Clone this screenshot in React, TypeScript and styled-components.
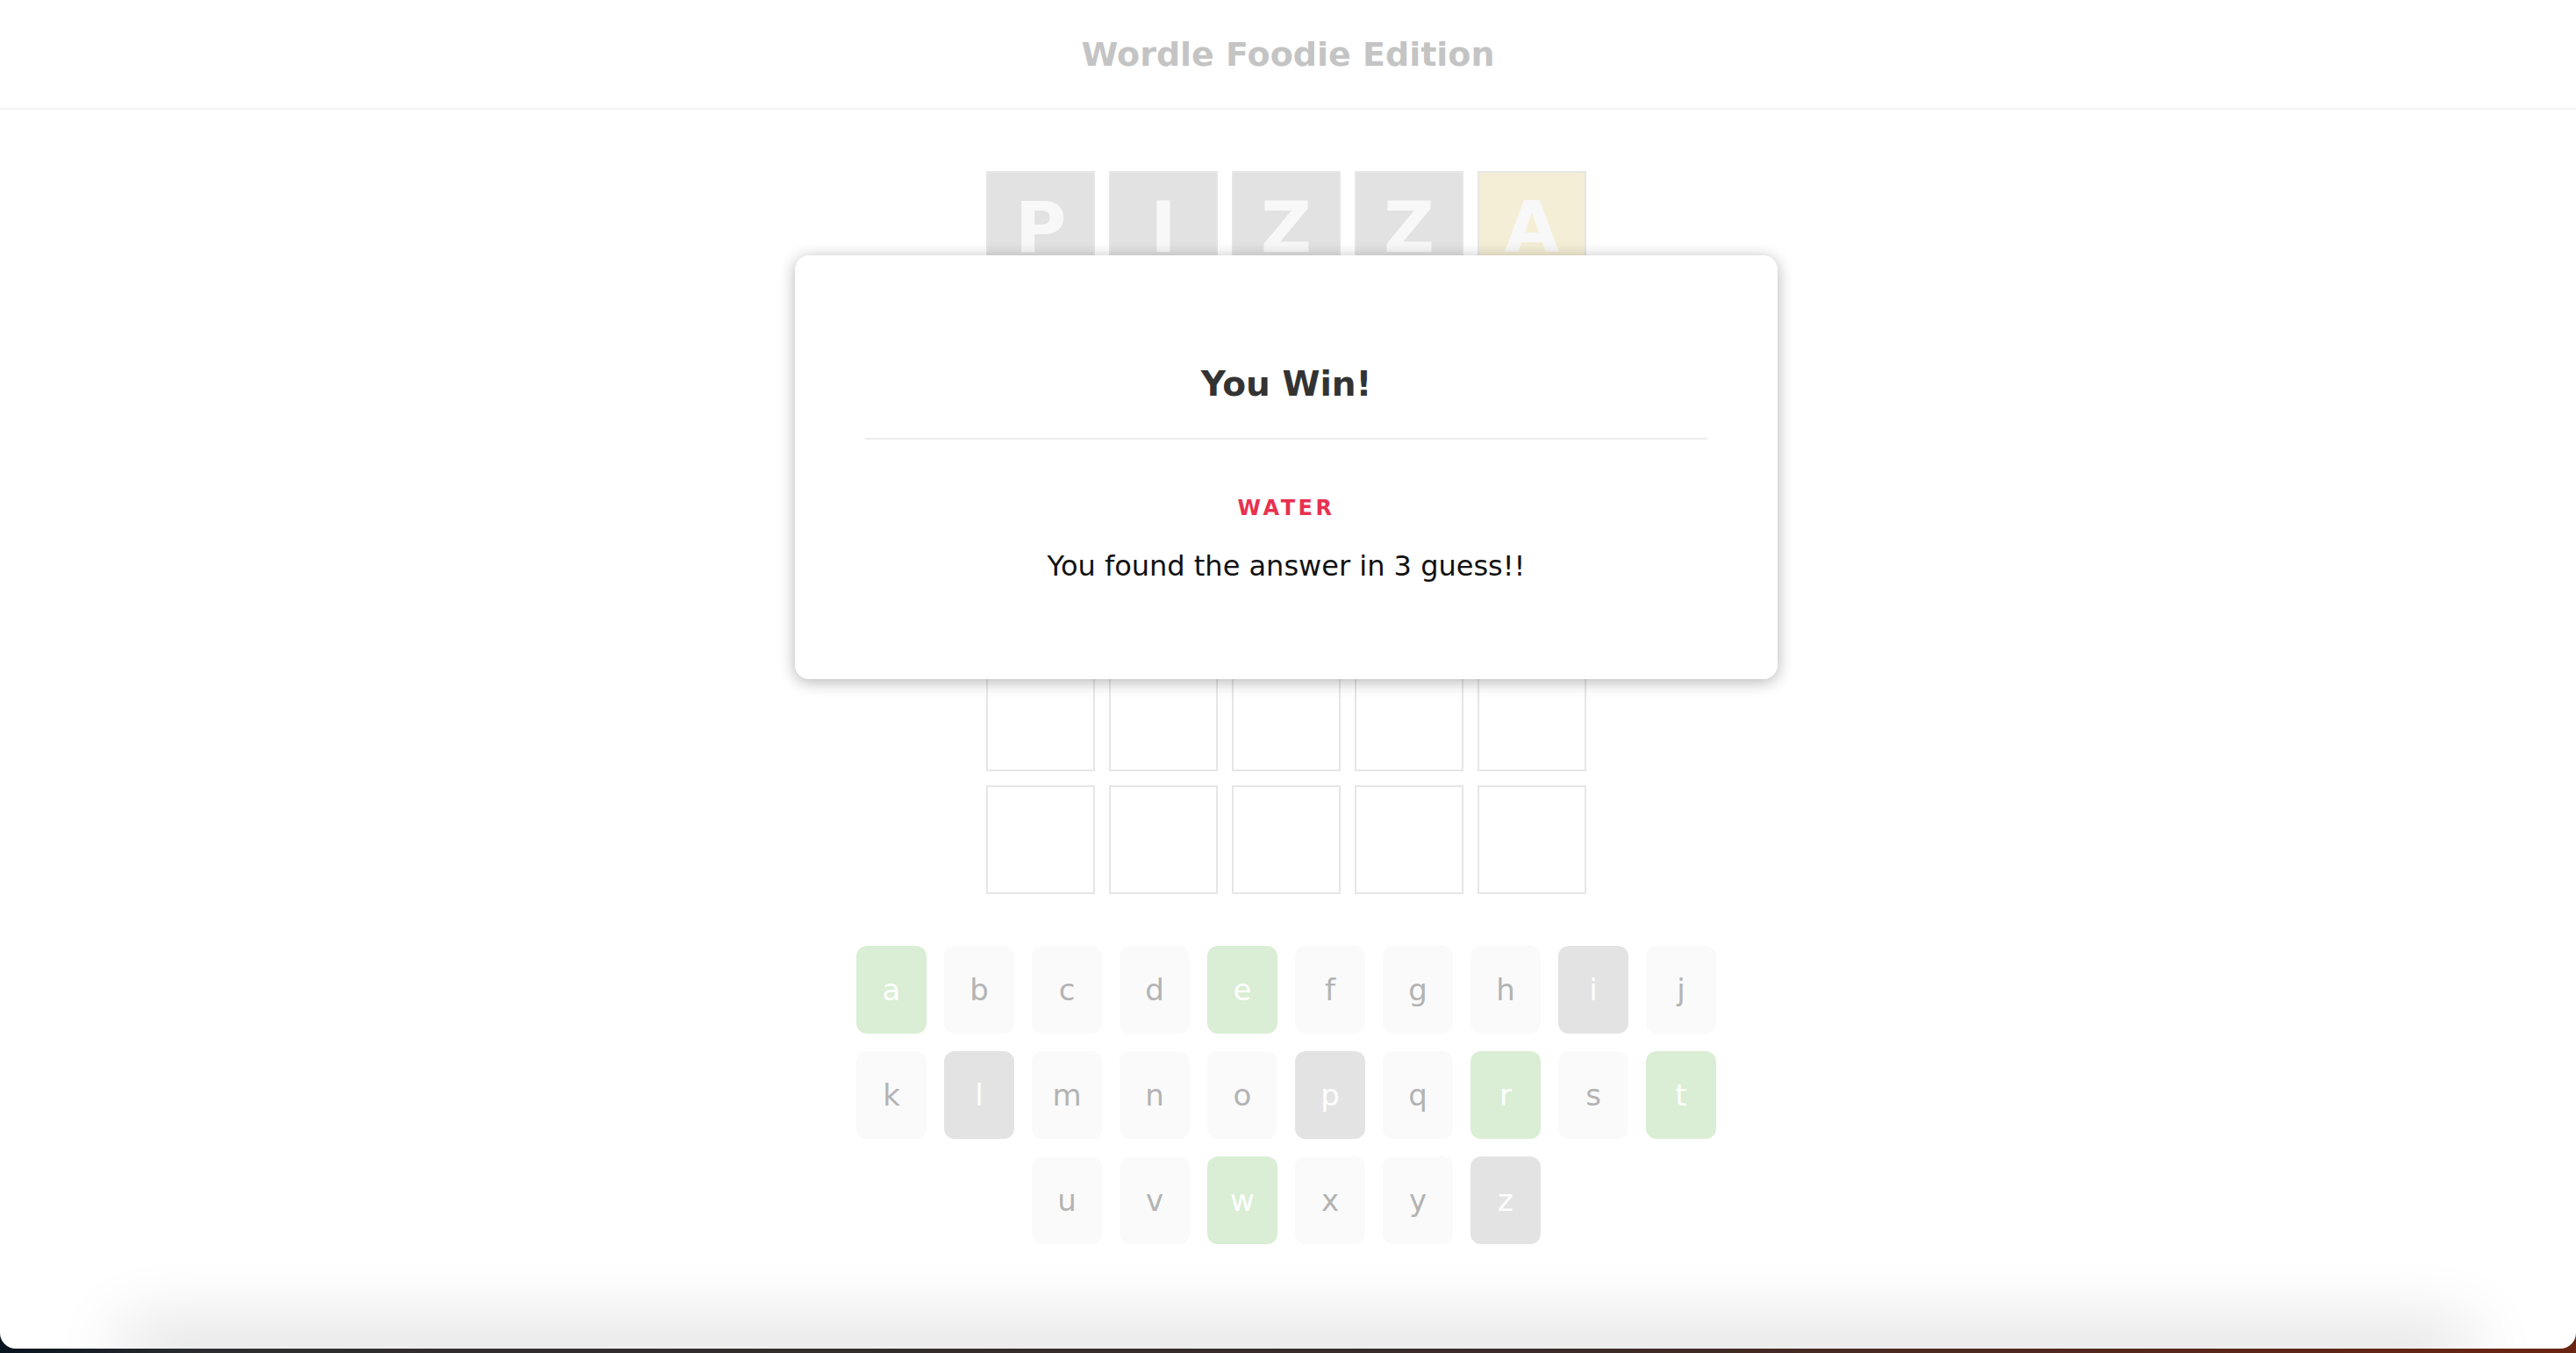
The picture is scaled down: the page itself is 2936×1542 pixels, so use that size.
import styled, { createGlobalStyle } from "styled-components";

type Status = "absent" | "present" | "correct" | "empty" | "unused";

// only the first guess shows; the modal covers the rest of the board
const GUESSES: { letter: string; status: Status }[][] = [
  [
    { letter: "P", status: "absent" },
    { letter: "I", status: "absent" },
    { letter: "Z", status: "absent" },
    { letter: "Z", status: "absent" },
    { letter: "A", status: "present" },
  ],
];

const KEY_ROWS = ["abcdefghij", "klmnopqrst", "uvwxyz"];
const USED_GREEN = "aertw";
const USED_GRAY = "ilpz";

const keyStatus = (k: string): Status =>
  USED_GREEN.includes(k) ? "correct" : USED_GRAY.includes(k) ? "absent" : "unused";

const GlobalStyle = createGlobalStyle`
  html, body {
    margin: 0;
    height: 100%;
  }
  body {
    background: linear-gradient(90deg, #08141f 0%, #2e2e30 8%, #3a2c2a 60%, #6a2412 100%);
    font-family: "DejaVu Sans", Verdana, sans-serif;
    overflow: hidden;
  }
`;

const Frame = styled.div`
  position: relative;
  height: calc(100vh - 5px);
  background: #ffffff;
  border-radius: 0 0 18px 18px;
  overflow: hidden;
  display: flex;
  flex-direction: column;
`;

const Header = styled.header`
  height: 123px;
  border-bottom: 2px solid #f4f4f4;
  display: flex;
  align-items: center;
  justify-content: center;
`;

const Title = styled.h1`
  margin: 0;
  font-size: 38px;
  line-height: 1;
  font-weight: bold;
  color: #c4c4c4;
`;

const Main = styled.main`
  display: flex;
  flex-direction: column;
  align-items: center;
  padding: 70px 4px 0 0;
`;

const Board = styled.div`
  display: grid;
  grid-template-columns: repeat(5, 124px);
  grid-auto-rows: 124px;
  gap: 16px;
`;

const tileBg: Record<Status, string> = {
  absent: "#e2e2e2",
  present: "#f5eed6",
  correct: "#d9eed4",
  empty: "#ffffff",
  unused: "#ffffff",
};

const Tile = styled.div<{ $status: Status }>`
  box-sizing: border-box;
  border: 2px solid #e6e6e6;
  background: ${(p) => tileBg[p.$status]};
  display: flex;
  align-items: center;
  justify-content: center;
  padding-top: 5px;
  font-size: 80px;
  line-height: 1;
  font-weight: bold;
  color: #f8f8f8;
`;

const Keyboard = styled.div`
  margin-top: 59px;
  display: flex;
  flex-direction: column;
  gap: 20px;
`;

const KeyRow = styled.div`
  display: flex;
  justify-content: center;
  gap: 20px;
`;

const keyBg: Record<Status, string> = {
  absent: "#e3e3e3",
  present: "#f5eed6",
  correct: "#d9eed4",
  empty: "#fafafa",
  unused: "#fafafa",
};

const Key = styled.button<{ $status: Status }>`
  width: 80px;
  height: 100px;
  border: none;
  border-radius: 12px;
  padding: 0;
  background: ${(p) => keyBg[p.$status]};
  color: ${(p) => (p.$status === "unused" ? "#b3b3b3" : "#ffffff")};
  font-family: "DejaVu Sans", Verdana, sans-serif;
  font-size: 34px;
  line-height: 1;
  display: flex;
  align-items: center;
  justify-content: center;
`;

const Shade = styled.div`
  margin: auto 140px 0 160px;
  height: 0;
  box-shadow: 0 0 80px 20px rgba(0, 0, 0, 0.19);
`;

const Modal = styled.div`
  position: absolute;
  top: 291px;
  left: 50%;
  transform: translateX(calc(-50% - 2px));
  box-sizing: border-box;
  width: 1120px;
  height: 483px;
  padding: 124px 80px 0;
  background: #ffffff;
  border-radius: 16px;
  box-shadow: 0 3px 18px rgba(0, 0, 0, 0.3);
  display: flex;
  flex-direction: column;
  align-items: center;
`;

const ModalTitle = styled.h2`
  margin: 0;
  font-size: 39px;
  font-weight: bold;
  color: #333333;
`;

const Divider = styled.hr`
  align-self: stretch;
  margin: 39px 0 0;
  border: none;
  height: 2px;
  background: #ececec;
`;

const Answer = styled.div`
  margin-top: 64px;
  font-size: 24px;
  font-weight: bold;
  letter-spacing: 3.5px;
  color: #e8314f;
`;

const Message = styled.p`
  margin: 33px 0 0;
  font-size: 32px;
  color: #111111;
`;

export default function App() {
  const rows = Array.from({ length: 6 }, (_, r) =>
    Array.from({ length: 5 }, (_, c) => GUESSES[r]?.[c] ?? { letter: "", status: "empty" as Status })
  );

  return (
    <>
      <GlobalStyle />
      <Frame>
        <Header>
          <Title>Wordle Foodie Edition</Title>
        </Header>
        <Main>
          <Board>
            {rows.flat().map((t, i) => (
              <Tile key={i} $status={t.status}>
                {t.letter}
              </Tile>
            ))}
          </Board>
          <Keyboard>
            {KEY_ROWS.map((row) => (
              <KeyRow key={row}>
                {row.split("").map((k) => (
                  <Key key={k} $status={keyStatus(k)}>
                    {k}
                  </Key>
                ))}
              </KeyRow>
            ))}
          </Keyboard>
        </Main>
        <Shade />
        <Modal>
          <ModalTitle>You Win!</ModalTitle>
          <Divider />
          <Answer>WATER</Answer>
          <Message>You found the answer in 3 guess!!</Message>
        </Modal>
      </Frame>
    </>
  );
}
